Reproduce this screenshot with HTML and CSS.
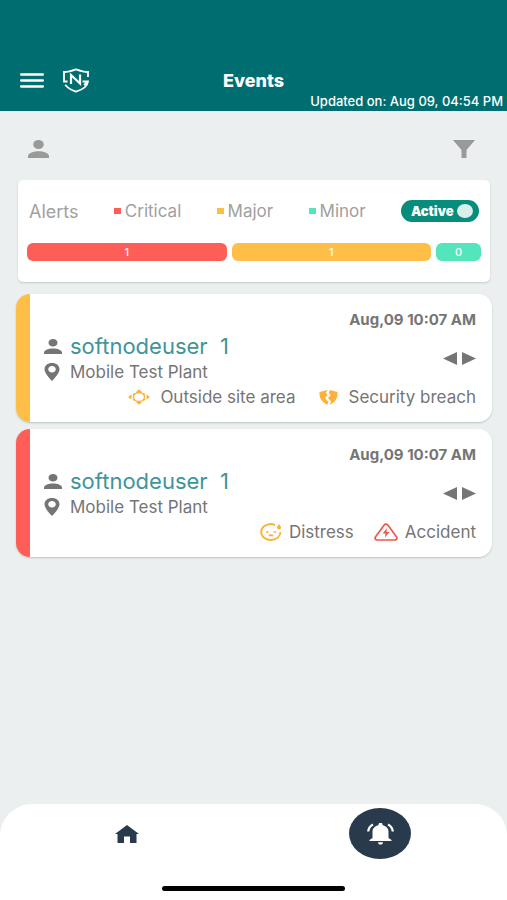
FILE: index.html
```html
<!DOCTYPE html>
<html lang="en">
<head>
<meta charset="utf-8">
<meta name="viewport" content="width=device-width, initial-scale=1">
<title>Events</title>
<link rel="stylesheet" href="styles.css">
</head>
<body>
<svg class="sprite" aria-hidden="true">
  <symbol id="person" viewBox="0 0 20 16" preserveAspectRatio="none">
    <ellipse cx="10" cy="4" rx="5" ry="4"/>
    <path d="M0 16v-1.500c0-3 5.500-4.500 10-4.500s10 1.500 10 4.500V16z"/>
  </symbol>
  <symbol id="pin" viewBox="0 0 16 18" preserveAspectRatio="none">
    <path fill-rule="evenodd" d="M8 0C3.500 0 .5 2.700.5 6.300.5 10.800 8 18 8 18s7.500-7.200 7.500-11.700C15.500 2.700 12.500 0 8 0zm0 3c2.200 0 3.800 1.400 3.800 3.200S10.200 9.500 8 9.500 4.200 8 4.200 6.200 5.800 3 8 3z"/>
  </symbol>
</svg>
<header class="topbar">
  <div class="topbar-row">
    <div class="topbar-left">
      <button class="icon-button" type="button" aria-label="Menu">
        <svg width="24" height="15" viewBox="0 0 24 15" fill="none" stroke="currentColor" stroke-width="2.400" stroke-linecap="round"><path d="M1.200 1.500h21.600M1.200 7.500h21.600M1.200 13.500h21.600"/></svg>
      </button>
      <svg class="logo" width="28" height="25" viewBox="0 0 28 25" fill="none" stroke="currentColor" stroke-width="1.800">
        <path d="M5.500 13.500H2V4C6 4 9.500 3 14 1.400 18.500 3 22 4 26 4v5"/>
        <path d="M20.500 13.500H26c-.5 4.500-5 8-12 10.100C9 22 5.500 20 3.200 16.800M26 13.500l-4 3.500"/>
        <path d="M9 16V7l9 8.500v-9" stroke-width="2.200"/>
      </svg>
    </div>
    <h1 class="title">Events</h1>
    <div></div>
  </div>
  <p class="updated">Updated on: Aug 09, 04:54 PM</p>
</header>

<main class="content">
  <div class="tools">
    <button class="icon-button" type="button" aria-label="User">
      <svg width="21" height="18" fill="currentColor"><use href="#person"/></svg>
    </button>
    <button class="icon-button" type="button" aria-label="Filter">
      <svg width="22" height="18" viewBox="0 0 22 18" fill="currentColor"><path d="M0 0h22l-8.500 10v8h-5v-8z"/></svg>
    </button>
  </div>

  <section class="alerts">
    <div class="alerts-head">
      <h2 class="alerts-title">Alerts</h2>
      <span class="legend critical">Critical</span>
      <span class="legend major">Major</span>
      <span class="legend minor">Minor</span>
      <label class="switch">Active<input type="checkbox" role="switch" checked></label>
    </div>
    <div class="bars">
      <div class="bar bar-critical">1</div>
      <div class="bar bar-major">1</div>
      <div class="bar bar-minor">0</div>
    </div>
  </section>

  <article class="event event-major">
    <time class="event-time">Aug,09 10:07 AM</time>
    <div class="event-body">
      <div>
        <div class="line user"><svg width="18" height="15"><use href="#person"/></svg><a href="#user">softnodeuser&nbsp; 1</a></div>
        <div class="line"><svg width="16" height="18"><use href="#pin"/></svg><span>Mobile Test Plant</span></div>
      </div>
      <div class="arrows">
        <button class="icon-button" type="button" aria-label="Previous"><svg width="14" height="13" viewBox="0 0 14 13"><path d="M14 0v13L0 6.500z"/></svg></button>
        <button class="icon-button" type="button" aria-label="Next"><svg width="14" height="13" viewBox="0 0 14 13"><path d="M0 0v13l14-6.500z"/></svg></button>
      </div>
    </div>
    <div class="tags">
      <span class="tag">
        <svg class="amber" width="22" height="16" viewBox="0 0 22 16" fill="none" stroke="currentColor" stroke-width="1.300"><ellipse cx="11" cy="8" rx="5.500" ry="4.500"/><path d="M5 6L6.500 4.500M15.500 4.500L17 6M5 10l1.500 1.500M15.500 11.500L17 10"/><path d="M11 .2l3 2.800H8zM11 15.800L8 13h6zM0 8l3.500-2.400v4.800zM22 8l-3.500-2.400v4.800z" fill="currentColor" stroke="none"/></svg>
        Outside site area
      </span>
      <span class="tag">
        <svg class="amber" width="19" height="15" viewBox="0 0 19 15" fill="currentColor"><path d="M8.500 0L.5 2C0 7 2.500 12.500 8.500 14.800L9.300 12 6 8 8.800 5 7 3z"/><path d="M11 0l7.500 2c.5 5-1.500 10-8 13l1.800-3.200L9 8l2.800-3L9.700 3z"/></svg>
        Security breach
      </span>
    </div>
  </article>

  <article class="event event-critical">
    <time class="event-time">Aug,09 10:07 AM</time>
    <div class="event-body">
      <div>
        <div class="line user"><svg width="18" height="15"><use href="#person"/></svg><a href="#user">softnodeuser&nbsp; 1</a></div>
        <div class="line"><svg width="16" height="18"><use href="#pin"/></svg><span>Mobile Test Plant</span></div>
      </div>
      <div class="arrows">
        <button class="icon-button" type="button" aria-label="Previous"><svg width="14" height="13" viewBox="0 0 14 13"><path d="M14 0v13L0 6.500z"/></svg></button>
        <button class="icon-button" type="button" aria-label="Next"><svg width="14" height="13" viewBox="0 0 14 13"><path d="M0 0v13l14-6.500z"/></svg></button>
      </div>
    </div>
    <div class="tags">
      <span class="tag tag-near">
        <svg class="amber" width="22" height="18" viewBox="0 0 22 18" fill="none" stroke="currentColor" stroke-width="1.900"><path d="M15 2.200C13.800 1.400 12.400 1 11 1 5.500 1 1.200 4.600 1.200 9S5.500 17 11 17s9.400-3.600 9.400-8"/><path d="M19 1c1.500 2 2 2.600 2 3.500a2 2 0 0 1-4 0c0-.9.500-1.500 2-3.500z" fill="currentColor" stroke="none"/><path d="M6 9h2.500M13.500 9H16M9 13c.7-1.200 3.300-1.200 4 0" stroke-width="1.600"/></svg>
        Distress
      </span>
      <span class="tag tag-near">
        <svg class="red" width="24" height="18" viewBox="0 0 24 18" fill="none" stroke="currentColor" stroke-width="1.700" stroke-linejoin="round"><path d="M10.200 2c.8-1.300 2.800-1.300 3.600 0l8.800 12c.8 1.400 0 3-1.800 3H3.200c-1.800 0-2.600-1.600-1.800-3z"/><path d="M13 5L8.500 10.500h3L11 14.500 15.500 9h-3z" fill="currentColor" stroke="none"/></svg>
        Accident
      </span>
    </div>
  </article>
</main>

<nav class="tabbar">
  <div class="tabs">
    <a class="tab" href="#home" aria-label="Home"><svg width="24" height="18" viewBox="0 0 24 18" fill="currentColor"><path d="M12 0l12 9h-2.500v9H15v-6.500H9V18H2.500V9H0z"/></svg></a>
    <a class="tab tab-active" href="#events" aria-label="Events"><svg width="27" height="22" viewBox="0 0 27 22" fill="currentColor"><path d="M11.500 2.200V1.400C11.500.5 12.300 0 13.500 0s2 .5 2 1.400v.8c3.800.8 6 3.200 6 6.300v6.500l3 2v1h-22v-1l3-2V8.500c0-3.100 2.200-5.500 6-6.300zM11 19.200h5c0 1.400-1 2.300-2.500 2.300S11 20.600 11 19.200z"/><path d="M6 1.500C3 3 1.500 5.500 1.200 8.500M21 1.500c3 1.500 4.500 4 4.800 7" fill="none" stroke="currentColor" stroke-width="2.200"/></svg></a>
  </div>
  <div class="home-indicator"></div>
</nav>
</body>
</html>
```
FILE: styles.css
```css
* {
  box-sizing: border-box;
}

body {
  margin: 0;
  min-height: 100vh;
  display: flex;
  flex-direction: column;
  background: #ebeff0;
  color: #757575;
  font-family: Inter, "Liberation Sans", sans-serif;
  font-size: 17px;
}

h1, h2, p {
  margin: 0;
}

svg {
  display: block;
  flex: none;
}

a {
  color: inherit;
  text-decoration: none;
}

.sprite {
  position: absolute;
  width: 0;
  height: 0;
}

.icon-button {
  padding: 0;
  border: 0;
  background: none;
  color: inherit;
}

.topbar {
  padding: 68px 4px 2px 20px;
  background: #006d70;
  color: #fff;
}

.topbar-row {
  display: grid;
  grid-template-columns: 1fr auto 1fr;
  align-items: center;
  height: 25px;
  padding-right: 16px;
}

.topbar-left {
  display: flex;
  align-items: center;
  gap: 18px;
}

.title {
  font-size: 18px;
  font-weight: 800;
  line-height: 24px;
}

.updated {
  font-size: 13px;
  font-weight: 500;
  line-height: 16px;
  text-align: right;
}

.content {
  flex: 1;
  padding: 0 15px 0 16px;
}

.tools {
  display: flex;
  justify-content: space-between;
  align-items: center;
  height: 69px;
  padding: 6px 17px 0 12px;
  color: #999;
}

.alerts {
  margin: 0 2px 12px;
  padding: 20px 9px 21px;
  border-radius: 5px;
  background: #fff;
  box-shadow: 0 1px 2px #c4caca;
}

.alerts-head {
  display: flex;
  align-items: center;
  justify-content: space-between;
  height: 22px;
  padding: 0 2px;
  color: #a0a0a0;
}

.alerts-title {
  font-size: 18px;
  font-weight: 400;
}

.legend {
  display: flex;
  align-items: center;
  gap: 4px;
}

.legend::before {
  content: "";
  width: 7px;
  height: 6px;
}

.critical::before,
.bar-critical {
  background: #ff5d57;
}

.major::before,
.bar-major {
  background: #ffbe47;
}

.minor::before,
.bar-minor {
  background: #54e5bd;
}

.switch {
  display: flex;
  align-items: center;
  justify-content: space-between;
  width: 78px;
  height: 22px;
  padding: 0 6px 0 10px;
  border-radius: 11px;
  background: #078d7c;
  color: #fff;
  font-size: 13px;
  font-weight: 900;
}

.switch input {
  appearance: none;
  width: 16px;
  height: 14px;
  margin: 0;
  border-radius: 50%;
  background: #d9efec;
}

.bars {
  display: flex;
  gap: 5px;
  margin-top: 21px;
}

.bar {
  flex: 200 1 0;
  border-radius: 6px;
  color: #fff;
  font-size: 11px;
  font-weight: 500;
  line-height: 18px;
  text-align: center;
}

.bar-minor {
  flex-grow: 45;
}

.event {
  margin-bottom: 7px;
  padding: 16px 16px 12px 28px;
  border-radius: 14px;
  box-shadow: 0 1px 2px #bcc2c2;
}

.event-major {
  background: linear-gradient(to right, #ffbe47 14px, #fff 14px);
}

.event-critical {
  background: linear-gradient(to right, #ff5d57 14px, #fff 14px);
}

.event-time {
  display: block;
  font-size: 15px;
  font-weight: 700;
  line-height: 20px;
  text-align: right;
}

.event-body {
  display: flex;
  align-items: center;
  justify-content: space-between;
  padding-top: 2px;
}

.line {
  display: grid;
  grid-template-columns: 18px auto;
  align-items: center;
  gap: 8px;
  height: 24px;
}

.line svg,
.arrows svg {
  fill: currentColor;
}

.user {
  height: 28px;
}

.user a {
  color: #41949a;
  font-size: 22px;
}

.arrows {
  display: flex;
  gap: 5px;
}

.tags {
  display: flex;
  justify-content: flex-end;
  gap: 24px;
  height: 26px;
}

.tag {
  display: flex;
  align-items: center;
  gap: 10px;
}

.tag-near {
  gap: 7px;
}

.event-critical .tags {
  gap: 20px;
}

.amber {
  color: #fbb13c;
}

.red {
  color: #f4544e;
}

.tabbar {
  padding: 4px 0 9px;
  border-radius: 32px 32px 0 0;
  background: #fff;
}

.tabs {
  display: grid;
  grid-template-columns: 1fr 1fr;
  justify-items: center;
}

.tab {
  display: flex;
  align-items: center;
  justify-content: center;
  width: 62px;
  height: 51px;
  border-radius: 50%;
  color: #283a4c;
}

.tab-active {
  background: #283a4c;
  color: #fff;
}

.home-indicator {
  width: 36%;
  height: 5px;
  margin: 27px auto 0;
  border-radius: 3px;
  background: #000;
}
```
